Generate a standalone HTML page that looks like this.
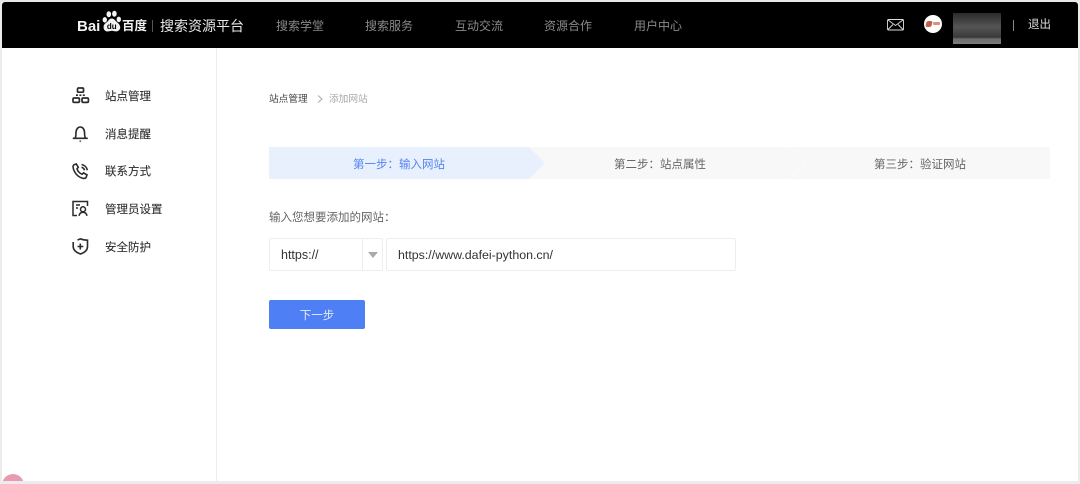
<!DOCTYPE html>
<html><head><meta charset="utf-8">
<style>
html,body{margin:0;padding:0}
body{width:1080px;height:484px;overflow:hidden;position:relative;background:#fff;font-family:"Liberation Sans","Noto Sans CJK SC",sans-serif}
#w{position:absolute;left:0;top:0;width:1080px;height:484px;filter:blur(.35px)}
.a{position:absolute;white-space:nowrap}
.nav{top:18px;font-size:12px;line-height:16px;color:#8a8a8a}
.side{left:105px;font-size:11.5px;line-height:16px;color:#2b2b2b;-webkit-text-stroke:.08px #2b2b2b}
svg{position:absolute;overflow:visible}
</style></head><body><div id="w">
<div class="a" style="left:0;top:0;width:1080px;height:484px;background:#fff"></div>
<div class="a" style="left:0;top:0;width:2px;height:484px;background:#ececec"></div>
<div class="a" style="left:1078px;top:0;width:2px;height:484px;background:#ececec"></div>
<div class="a" style="left:0;top:481px;width:1080px;height:3px;background:#ececec"></div>
<div class="a" style="left:0;top:0;width:1080px;height:2px;background:#e8e8e8"></div>
<div class="a" style="left:216px;top:47px;width:1px;height:434px;background:#eeeeee"></div>
<div class="a" style="left:2px;top:2px;width:1076px;height:45.500px;background:#000;border-radius:3px 3px 0 0"></div>

<div class="a" style="left:77px;top:17px;font-size:15px;line-height:20px;font-weight:bold;color:#f2f2f2">Bai</div>
<svg style="left:102px;top:11px" width="20" height="24" viewBox="0 0 20 24" fill="#f2f2f2">
<ellipse cx="6.800" cy="3.300" rx="2.300" ry="3"/><ellipse cx="12.400" cy="2.800" rx="2.300" ry="3"/><ellipse cx="2.800" cy="8.800" rx="2.200" ry="2.800"/><ellipse cx="16.800" cy="8.400" rx="2.200" ry="2.800"/>
<path d="M9.700 7.500C7 7.500 6.600 10 4.600 11.400 2.600 12.800 1.400 14.200 1.600 16.600 1.800 19.600 4.400 20.800 6.200 20.400 8 20.100 8.600 19.700 9.800 19.700 11 19.700 11.800 20.200 13.600 20.400 16 20.600 18.400 19 18.200 16 18 13.800 16.500 12.400 15 11.200 13.200 9.800 12.200 7.500 9.700 7.500Z"/>
<text x="9.800" y="18" font-size="8" font-weight="bold" text-anchor="middle" fill="#000" font-family="Liberation Sans">du</text></svg>
<div class="a" style="left:122px;top:17px;font-size:12.500px;line-height:19px;font-weight:bold;color:#f2f2f2">百度</div>
<div class="a" style="left:152px;top:20px;width:1px;height:12px;background:#555"></div>
<div class="a" style="left:160px;top:16px;font-size:14px;line-height:20px;color:#e8e8e8">搜索资源平台</div>

<div class="a nav" style="left:276px">搜索学堂</div>
<div class="a nav" style="left:365px">搜索服务</div>
<div class="a nav" style="left:455px">互动交流</div>
<div class="a nav" style="left:544px">资源合作</div>
<div class="a nav" style="left:634px">用户中心</div>

<svg style="left:887px;top:19px" width="18" height="12" viewBox="0 0 18 12" fill="none" stroke="#dcdcdc" stroke-width=".9"><rect x=".5" y=".5" width="16" height="10.500" rx="1"/><path d="M1 1l7.500 5.500L16 1M1 10.500l5-5M16 10.500l-5-5"/></svg>
<div class="a" style="left:924px;top:15px;width:18px;height:18px;border-radius:50%;background:#fff"></div>
<div class="a" style="left:926px;top:21px;width:6px;height:6px;background:#b5432a;border-radius:2px;transform:skewX(-15deg);opacity:.85"></div>
<div class="a" style="left:933px;top:22px;width:7px;height:3px;background:#c77a60;border-radius:1px;opacity:.8"></div>
<div class="a" style="left:953px;top:13px;width:48px;height:31px;background:linear-gradient(#2a2a2a,#555 45%,#3a3a3a 78%,#6e6e6e 84%,#7c7c7c)"></div>
<div class="a" style="left:1013px;top:20px;width:1px;height:11px;background:#888"></div>
<div class="a" style="left:1028px;top:17px;font-size:11.500px;line-height:16px;color:#ddd">退出</div>

<svg style="left:72px;top:87px" width="18" height="18" viewBox="0 0 18 18" fill="none" stroke="#2b2b2b" stroke-width="1.700"><rect x="5.500" y="1" width="6" height="4.200" rx="1"/><rect x="1" y="11" width="6.400" height="4.400" rx="1.200"/><rect x="10" y="11" width="6.400" height="4.400" rx="1.200"/><path d="M4 8.200h10" stroke-dasharray="2 1.400"/></svg>
<div class="a side" style="top:89px">站点管理</div>

<svg style="left:72px;top:125px" width="17" height="18" viewBox="0 0 17 18" fill="none" stroke="#2b2b2b" stroke-width="1.600"><path d="M.8 13.300h15M3 13c1-1 .9-2.200.9-4.500C3.900 4.500 5.700 2 8.300 2s4.300 2.500 4.300 6.500c0 2.300 0 3.500 1 4.500"/><path d="M8.300 15.500v1.200"/></svg>
<div class="a side" style="top:127px">消息提醒</div>

<svg style="left:72px;top:163px" width="17" height="17" viewBox="0 0 17 17" fill="none" stroke="#2b2b2b" stroke-width="1.600"><path d="M2 1.800l2.300-.8 2 3.300-1.300 1.500c.6 2.400 2.700 4.700 5.100 5.400l1.500-1.300 3.400 2-.9 2.500c-.5 1-1.800 1.200-3 .9C6 14.200 2.300 10 1.200 5 .9 3.500 1 2.400 2 1.800Z"/><path d="M9.500 1.500c3 .5 5.300 2.800 5.800 5.800M9.500 4.300c1.500.3 2.700 1.500 3 3"/></svg>
<div class="a side" style="top:164px">联系方式</div>

<svg style="left:72px;top:200px" width="17" height="17" viewBox="0 0 17 17" fill="none" stroke="#2b2b2b" stroke-width="1.500"><path d="M5 15.500H1V1.500h14.500V6"/><path d="M4 5h4M4 8h2"/><circle cx="11" cy="9.300" r="2.500"/><path d="M7 15.800c.5-2.300 2-3.600 4-3.600s3.500 1.300 4 3.600"/></svg>
<div class="a side" style="top:202px">管理员设置</div>

<svg style="left:72px;top:238px" width="17" height="17" viewBox="0 0 17 17" fill="none" stroke="#2b2b2b" stroke-width="1.600"><path d="M1.200 4v4.500c0 3.500 3 6 7.300 7.500 4.300-1.500 7-4 7-7.500V2.200C12.500 2.200 10.500 1.800 8.500.9 7.500 1.300 6.500 1.700 5.500 2"/><path d="M8.300 5.500v6M5.500 8.500h5.800"/></svg>
<div class="a side" style="top:240px">安全防护</div>

<div class="a" style="left:269px;top:93px;font-size:9.700px;line-height:14px;color:#444">站点管理</div>
<svg style="left:317px;top:95px" width="6" height="8" viewBox="0 0 6 8" fill="none" stroke="#aaa" stroke-width="1"><path d="M1 .5L5 4 1 7.500"/></svg>
<div class="a" style="left:329px;top:93px;font-size:9.700px;line-height:14px;color:#aaa">添加网站</div>

<div class="a" style="left:269px;top:147px;width:781px;height:32px;background:#f8f8f8"></div>
<svg style="left:269px;top:147px" width="781" height="32"><path d="M0 0H260L276 16 260 32H0Z" fill="#e9f0fd"/><path d="M521 0L537 16 521 32" fill="none" stroke="#fff" stroke-width=".7" stroke-opacity=".7"/></svg>
<div class="a" style="left:353px;top:157px;font-size:11.500px;line-height:16px;color:#5585f0">第一步：输入网站</div>
<div class="a" style="left:614px;top:157px;font-size:11.500px;line-height:16px;color:#666">第二步：站点属性</div>
<div class="a" style="left:874px;top:157px;font-size:11.500px;line-height:16px;color:#666">第三步：验证网站</div>

<div class="a" style="left:269px;top:209.500px;font-size:11.500px;line-height:16px;color:#666">输入您想要添加的网站：</div>

<div class="a" style="left:269px;top:238px;width:112px;height:31px;border:1px solid #eeeeee;border-radius:2px"></div>
<div class="a" style="left:362px;top:239px;width:1px;height:31px;background:#eeeeee"></div>
<svg style="left:368px;top:252px" width="10" height="6"><path d="M0 0h10L5 6Z" fill="#aaa"/></svg>
<div class="a" style="left:281px;top:247px;font-size:12.500px;line-height:16px;color:#333">https://</div>
<div class="a" style="left:386px;top:238px;width:348px;height:31px;border:1px solid #eeeeee;border-radius:2px"></div>
<div class="a" style="left:398px;top:247px;font-size:12.400px;line-height:16px;color:#333">https://www.dafei-python.cn/</div>

<div class="a" style="left:269px;top:300px;width:96px;height:29px;background:#4f7ff5;border-radius:2px"></div>
<div class="a" style="left:269px;top:308px;width:96px;text-align:center;font-size:11.500px;line-height:16px;color:#e4ecff">下一步</div>

<div class="a" style="left:2px;top:474px;width:24px;height:7px;overflow:hidden"><div style="width:22px;height:22px;border-radius:50%;background:#e89ab0"></div></div>
</div></body></html>
